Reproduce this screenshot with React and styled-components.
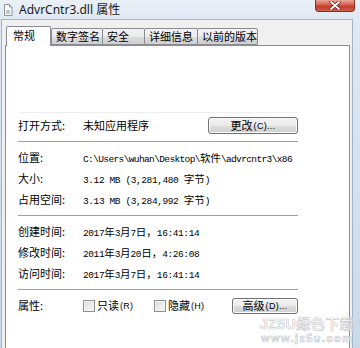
import styled, { createGlobalStyle } from "styled-components";

const GlobalStyle = createGlobalStyle`
  html, body {
    margin: 0;
    padding: 0;
  }
  body {
    width: 360px;
    height: 348px;
    overflow: hidden;
    background: #d6e2f0;
  }
`;

const CJK = `"Noto Sans CJK SC", sans-serif`;
const MONO = `"Liberation Mono", "Noto Sans CJK SC", monospace`;

const Window = styled.div`
  position: relative;
  width: 360px;
  height: 348px;
  overflow: hidden;
  display: flex;
  flex-direction: column;
  background: linear-gradient(180deg, #eaf0f7 0px, #dfe8f3 20px, #c9d9ec 100%);
`;

const TitleBar = styled.div`
  height: 19px;
  flex-shrink: 0;
  display: flex;
  align-items: center;
  padding-left: 2px;
`;

const TitleText = styled.span`
  margin-left: 5px;
  font: 12px "Noto Sans", "Noto Sans CJK SC", sans-serif;
  line-height: 14px;
  color: #1b1b1b;
`;

const CloseButton = styled.div`
  align-self: flex-start;
  margin-left: auto;
  margin-right: 5px;
  width: 40px;
  height: 12px;
  box-sizing: border-box;
  border: 1px solid #8a2f25;
  border-top: none;
  border-radius: 0 0 4px 4px;
  background: linear-gradient(180deg, #e9a596 0%, #d6604f 45%, #c03a2b 55%, #d0604c 100%);
  display: flex;
  align-items: center;
  justify-content: center;
`;

const Client = styled.div`
  flex: 1;
  display: flex;
  flex-direction: column;
  margin: 0 7px 0 1px;
  padding: 6px 2px 0 3px;
  background: #f0f0f0;
  border: 1px solid #a3b4c9;
  border-bottom: none;
`;

const TabStrip = styled.div`
  height: 19px;
  display: flex;
  align-items: flex-end;
`;

const Tab = styled.div`
  position: relative;
  box-sizing: border-box;
  width: ${(p) => p.$w}px;
  height: ${(p) => (p.$active ? 20 : 17)}px;
  margin-left: ${(p) => p.$ml}px;
  margin-bottom: ${(p) => (p.$active ? -1 : 0)}px;
  z-index: ${(p) => (p.$active ? 2 : 1)};
  border: 1px solid #898c95;
  border-bottom: ${(p) => (p.$active ? "none" : "1px solid #898c95")};
  border-radius: 2px 2px 0 0;
  background: ${(p) =>
    p.$active ? "#ffffff" : "linear-gradient(180deg, #f3f3f3 0%, #ebebeb 50%, #dddddd 51%, #cfcfcf 100%)"};
  font: 11px ${CJK};
  line-height: 13px;
  color: #000;
  padding: ${(p) => (p.$active ? "2px 0 0 6px" : "1px 0 0 4px")};
`;

const Panel = styled.div`
  flex: 1;
  background: #ffffff;
  border: 1px solid #898c95;
  border-bottom: none;
  display: flex;
  flex-direction: column;
  padding-left: 12px;
`;

const Body = styled.div`
  width: 280px;
  display: flex;
  flex-direction: column;
`;

const TopArea = styled.div`
  height: 66px;
`;

const Line = styled.div`
  height: 1px;
  background: ${(p) => (p.$faint ? "#eeeeee" : "#a0a0a0")};
`;

const Group = styled.div`
  display: flex;
  flex-direction: column;
  padding: ${(p) => (p.$first ? "2px 0 5px" : "5px 0")};
`;

const Row = styled.div`
  height: 21px;
  display: flex;
  align-items: center;
`;

const Label = styled.div`
  width: 65px;
  flex-shrink: 0;
  font: 11px ${CJK};
  line-height: 13px;
  color: #000;
`;

const Value = styled.div`
  flex: 1;
  min-width: 0;
  white-space: nowrap;
  font: 9.5px ${MONO};
  letter-spacing: ${(p) => (p.$tight ? -0.62 : -0.4)}px;
  line-height: 13px;
  color: #000;
`;

const Han = styled.span`
  font: 10.5px ${CJK};
  letter-spacing: 0;
`;

const Plain = styled.div`
  flex: 1;
  font: 11px ${CJK};
  line-height: 13px;
  color: #000;
`;

const Button = styled.div`
  margin-left: auto;
  width: ${(p) => p.$w}px;
  height: ${(p) => p.$h}px;
  box-sizing: border-box;
  border: 1px solid #707070;
  border-radius: 3px;
  box-shadow: inset 0 0 0 1px #fbfbfb;
  background: linear-gradient(180deg, #f2f2f2 0%, #ebebeb 50%, #dddddd 51%, #cfcfcf 100%);
  display: flex;
  align-items: center;
  justify-content: center;
  font: 11px ${CJK};
  line-height: 13px;
  color: #000;
`;

const Small = styled.span`
  font: 9px "Liberation Sans", sans-serif;
  letter-spacing: 0.3px;
  margin-left: 1px;
`;

const Check = styled.div`
  width: ${(p) => p.$w}px;
  display: flex;
  align-items: center;
  font: 11px ${CJK};
  line-height: 13px;
  color: #000;
`;

const Box = styled.div`
  width: 12px;
  height: 12px;
  box-sizing: border-box;
  margin-right: 2px;
  border: 1px solid #8e8f8f;
  background: linear-gradient(135deg, #d8d8d8 0%, #eeeeee 60%, #f8f8f8 100%);
  box-shadow: inset 0 0 0 1px #f4f4f4;
`;

const Watermark = styled.div`
  position: absolute;
  left: 260px;
  top: 316px;
  display: flex;
  flex-direction: column;
  align-items: center;
  color: rgba(255, 255, 255, 0.6);
  -webkit-text-stroke: 0.7px #c9ccd0;
  pointer-events: none;
`;

const MarkBig = styled.div`
  font: 700 14px "Liberation Sans", "Noto Sans CJK SC", sans-serif;
  line-height: 16px;
  letter-spacing: 0.5px;
`;

const MarkSmall = styled.div`
  font: 700 11px "Liberation Sans", sans-serif;
  line-height: 12px;
  letter-spacing: 1.4px;
`;

const FileIcon = () => (
  <svg width="12" height="12" viewBox="0 0 12 12">
    <path d="M2.5 0.5h5l2.5 2.5v8.5h-7.5z" fill="#fdfdfd" stroke="#8d959f" />
    <path d="M7.5 0.5v2.5h2.5" fill="#e4e8ec" stroke="#8d959f" />
    <circle cx="6" cy="8" r="2" fill="#9aa7b6" />
    <circle cx="6" cy="8" r="0.8" fill="#fff" />
  </svg>
);

const CloseGlyph = () => (
  <svg width="12" height="9" viewBox="0 0 12 9">
    <path d="M2 1l8 7M10 1l-8 7" stroke="#5a1a14" strokeWidth="3.2" strokeLinecap="round" />
    <path d="M2 1l8 7M10 1l-8 7" stroke="#ffffff" strokeWidth="1.8" strokeLinecap="round" />
  </svg>
);

const tabs = [
  { t: "常规", w: 45, ml: 1, active: true },
  { t: "数字签名", w: 52, ml: 0 },
  { t: "安全", w: 43, ml: -1 },
  { t: "详细信息", w: 54, ml: -1 },
  { t: "以前的版本", w: 61, ml: -1 },
];

const Stamp = ({ y, m, d, time }) => (
  <Value>
    {y}
    <Han>年</Han>
    {m}
    <Han>月</Han>
    {d}
    <Han>日，</Han>
    {time}
  </Value>
);

export default function App() {
  return (
    <>
      <GlobalStyle />
      <Window>
        <TitleBar>
          <FileIcon />
          <TitleText>AdvrCntr3.dll 属性</TitleText>
          <CloseButton>
            <CloseGlyph />
          </CloseButton>
        </TitleBar>
        <Client>
          <TabStrip>
            {tabs.map((tab) => (
              <Tab key={tab.t} $w={tab.w} $ml={tab.ml} $active={tab.active}>
                {tab.t}
              </Tab>
            ))}
          </TabStrip>
          <Panel>
            <Body>
              <TopArea />
              <Line $faint />
              <Group $first>
                <Row>
                  <Label>打开方式:</Label>
                  <Plain>未知应用程序</Plain>
                  <Button $w={90} $h={17}>
                    更改<Small>(C)...</Small>
                  </Button>
                </Row>
              </Group>
              <Line />
              <Group>
                <Row>
                  <Label>位置:</Label>
                  <Value $tight>
                    {"C:\\Users\\wuhan\\Desktop\\"}
                    <Han>软件</Han>
                    {"\\advrcntr3\\x86"}
                  </Value>
                </Row>
                <Row>
                  <Label>大小:</Label>
                  <Value>
                    3.12 MB (3,281,480 <Han>字节</Han>)
                  </Value>
                </Row>
                <Row>
                  <Label>占用空间:</Label>
                  <Value>
                    3.13 MB (3,284,992 <Han>字节</Han>)
                  </Value>
                </Row>
              </Group>
              <Line />
              <Group>
                <Row>
                  <Label>创建时间:</Label>
                  <Stamp y="2017" m="3" d="7" time="16:41:14" />
                </Row>
                <Row>
                  <Label>修改时间:</Label>
                  <Stamp y="2011" m="3" d="20" time="4:26:08" />
                </Row>
                <Row>
                  <Label>访问时间:</Label>
                  <Stamp y="2017" m="3" d="7" time="16:41:14" />
                </Row>
              </Group>
              <Line />
              <Group>
                <Row>
                  <Label>属性:</Label>
                  <Check $w={71}>
                    <Box />
                    只读<Small>(R)</Small>
                  </Check>
                  <Check $w={56}>
                    <Box />
                    隐藏<Small>(H)</Small>
                  </Check>
                  <Button $w={66} $h={16}>
                    高级<Small>(D)...</Small>
                  </Button>
                </Row>
              </Group>
            </Body>
          </Panel>
        </Client>
        <Watermark>
          <MarkBig>JZ5U绿色下载</MarkBig>
          <MarkSmall>www.jz5u.com</MarkSmall>
        </Watermark>
      </Window>
    </>
  );
}
